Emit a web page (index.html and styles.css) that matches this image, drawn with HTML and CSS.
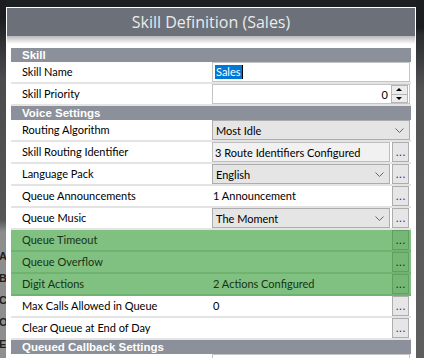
FILE: index.html
```html
<!DOCTYPE html>
<html lang="en">
<head>
    <meta charset="UTF-8">
    <meta name="viewport" content="width=device-width, initial-scale=1.0">
    <title>Skill Definition (Sales)</title>
    <link rel="stylesheet" href="styles.css">
</head>
<body>

    <div class="screen">
        <div class="backdrop-left">
            <span>A</span>
            <span>B</span>
            <span>C</span>
            <span>O</span>
            <span>E</span>
        </div>

        <div class="dialog">
            <div class="dialog-title">Skill Definition (Sales)</div>
            <div class="dialog-shade"></div>

            <div class="form">
                <div class="section">Skill</div>

                <div class="row">
                    <div class="label">Skill Name</div>
                    <div class="value full">
                        <div class="field"><span class="selected">Sales</span><span class="caret"></span></div>
                    </div>
                </div>

                <div class="row">
                    <div class="label">Skill Priority</div>
                    <div class="value full">
                        <div class="field number">
                            <span class="number-text">0</span>
                            <div class="spinner">
                                <span class="spin up"></span>
                                <span class="spin down"></span>
                            </div>
                        </div>
                    </div>
                </div>

                <div class="section">Voice Settings</div>

                <div class="row">
                    <div class="label">Routing Algorithm</div>
                    <div class="value full">
                        <div class="dropdown">
                            <span>Most Idle</span>
                            <svg class="chevron" width="9" height="5" viewBox="0 0 9 5"><polyline points="0.5,0.5 4.5,4.5 8.5,0.5" fill="none" stroke="#666" stroke-width="1"/></svg>
                        </div>
                    </div>
                </div>

                <div class="row">
                    <div class="label">Skill Routing Identifier</div>
                    <div class="value">
                        <div class="field readonly">3 Route Identifiers Configured</div>
                        <button class="more">...</button>
                    </div>
                </div>

                <div class="row">
                    <div class="label">Language Pack</div>
                    <div class="value">
                        <div class="dropdown">
                            <span>English</span>
                            <svg class="chevron" width="9" height="5" viewBox="0 0 9 5"><polyline points="0.5,0.5 4.5,4.5 8.5,0.5" fill="none" stroke="#666" stroke-width="1"/></svg>
                        </div>
                        <button class="more">...</button>
                    </div>
                </div>

                <div class="row">
                    <div class="label">Queue Announcements</div>
                    <div class="value">
                        <div class="value-text">1 Announcement</div>
                        <button class="more">...</button>
                    </div>
                </div>

                <div class="row">
                    <div class="label">Queue Music</div>
                    <div class="value">
                        <div class="dropdown">
                            <span>The Moment</span>
                            <svg class="chevron" width="9" height="5" viewBox="0 0 9 5"><polyline points="0.5,0.5 4.5,4.5 8.5,0.5" fill="none" stroke="#666" stroke-width="1"/></svg>
                        </div>
                        <button class="more">...</button>
                    </div>
                </div>

                <div class="row flagged">
                    <div class="label">Queue Timeout</div>
                    <div class="value">
                        <div class="value-text"></div>
                        <button class="more">...</button>
                    </div>
                </div>

                <div class="row flagged">
                    <div class="label">Queue Overflow</div>
                    <div class="value">
                        <div class="value-text"></div>
                        <button class="more">...</button>
                    </div>
                </div>

                <div class="row flagged">
                    <div class="label">Digit Actions</div>
                    <div class="value">
                        <div class="value-text">2 Actions Configured</div>
                        <button class="more">...</button>
                    </div>
                </div>

                <div class="row">
                    <div class="label">Max Calls Allowed in Queue</div>
                    <div class="value">
                        <div class="value-text">0</div>
                        <button class="more">...</button>
                    </div>
                </div>

                <div class="row">
                    <div class="label">Clear Queue at End of Day</div>
                    <div class="value">
                        <div class="value-text"></div>
                        <button class="more">...</button>
                    </div>
                </div>

                <div class="section">Queued Callback Settings</div>

                <div class="row">
                    <div class="label"></div>
                    <div class="value full">
                        <div class="field"></div>
                    </div>
                </div>
            </div>
        </div>

        <div class="backdrop-right"></div>
    </div>

</body>
</html>
```

FILE: styles.css
```css
body {
    margin: 0;
    background-color: #1e1f22;
    font-family: Lato, "Liberation Sans", sans-serif;
    font-size: 11px;
    color: #000;
}

.screen {
    display: flex;
    width: 424px;
    height: 358px;
    overflow: hidden;
}

.backdrop-left {
    width: 6px;
    flex: none;
    box-sizing: border-box;
    padding-top: 245px;
    overflow: hidden;
    background: linear-gradient(to bottom, #1c1d20 0, #1c1d20 18px, #333438 45px, #4c4c4e 80px, #565656 220px, #8d8d8d 232px, #8f8f8f 358px);
}

.backdrop-left span {
    display: block;
    margin-left: -1px;
    font: bold 11px/22px "Liberation Sans", sans-serif;
    color: #202020;
}

.backdrop-right {
    flex: 1;
    background: linear-gradient(to bottom, #1c1d20 0, #1c1d20 28px, #2b2c30 34px, #3c3d40 60px, #545454 90px, #5e5e5e 358px);
}

.dialog {
    width: 410px;
    flex: none;
    margin-top: 7px;
    box-sizing: border-box;
    border: 1px solid #fff;
    border-bottom: none;
    background-color: #fff;
}

.dialog-title {
    height: 28px;
    line-height: 28px;
    background-color: #6c7079;
    color: #ebebeb;
    font-family: "Open Sans", sans-serif;
    font-size: 16px;
    text-align: center;
}

.dialog-shade {
    height: 8px;
    background: linear-gradient(to bottom, #b8b8b8, #fff);
}

.form {
    padding: 4px 4px 0 4px;
}

.section {
    height: 14px;
    line-height: 14px;
    padding-left: 11px;
    background-color: #8b909a;
    color: #fff;
    font-family: "Liberation Sans", sans-serif;
    font-size: 11.5px;
    font-weight: bold;
}

.row {
    display: grid;
    grid-template-columns: 200px 200px;
    height: 20px;
    border-bottom: 2px solid #e4e4e4;
    background-color: #fff;
}

.row.flagged {
    background-color: #80c080;
    border-bottom-color: #70b270;
    color: #163416;
}

.label {
    padding-left: 11px;
    line-height: 20px;
    white-space: nowrap;
}

.value {
    display: flex;
    gap: 2px;
    padding: 0 2px 0 1px;
    min-width: 0;
}

.value.full {
    padding-right: 1px;
}

.value-text {
    flex: 1;
    padding-left: 1px;
    line-height: 20px;
    white-space: nowrap;
}

.field {
    flex: 1;
    display: flex;
    align-items: center;
    box-sizing: border-box;
    padding: 0 2px;
    border: 1px solid #c4c4c4;
    white-space: nowrap;
}

.field.readonly {
    background-color: #f1f1f1;
    border-color: #bdbdbd;
}

.selected {
    background-color: #0078d7;
    color: #fff;
    line-height: 14px;
    padding: 0 1px;
}

.caret {
    width: 1px;
    height: 14px;
    background-color: #000;
}

.field.number {
    justify-content: flex-end;
    padding-right: 1px;
}

.number-text {
    margin-right: 3px;
}

.spinner {
    display: flex;
    flex-direction: column;
    width: 15px;
    height: 16px;
    border: 1px solid #b5b5b5;
    background-color: #ececec;
}

.spin {
    flex: 1;
    position: relative;
}

.spin.up {
    border-bottom: 1px solid #b5b5b5;
}

.spin.up::after,
.spin.down::after {
    content: "";
    position: absolute;
    left: 4px;
    border-left: 3px solid transparent;
    border-right: 3px solid transparent;
}

.spin.up::after {
    top: 2px;
    border-bottom: 3px solid #000;
}

.spin.down::after {
    top: 2px;
    border-top: 3px solid #000;
}

.dropdown {
    flex: 1;
    display: flex;
    align-items: center;
    justify-content: space-between;
    box-sizing: border-box;
    padding: 0 5px 0 3px;
    border: 1px solid #adadad;
    background-color: #e5e5e5;
    white-space: nowrap;
}

.chevron {
    flex: none;
}

.more {
    width: 17px;
    flex: none;
    margin: 0;
    padding: 0;
    border: 1px solid #adadad;
    background-color: #e6e6e6;
    color: #34288a;
    font-family: "Liberation Sans", sans-serif;
    font-size: 12px;
    line-height: 18px;
    text-align: center;
}

.row.flagged .more {
    background-color: #76b776;
    border-color: #5f9f5f;
    color: #143314;
}
```
